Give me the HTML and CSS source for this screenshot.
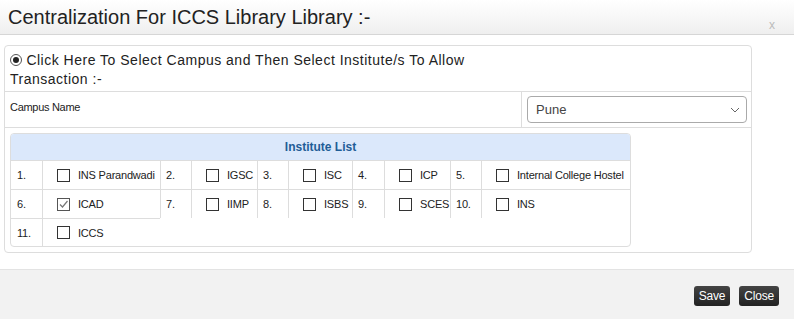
FILE: index.html
```html
<!DOCTYPE html>
<html lang="en">
<head>
  <meta charset="UTF-8" />
  <title>Centralization For ICCS Library</title>
  <link rel="stylesheet" href="styles.css">
</head>
<body>
  <div class="modal">
    <div class="modal-header">
      <h4 class="modal-title">Centralization For ICCS Library Library :-</h4>
      <span class="close">x</span>
    </div>

    <div class="modal-body">
      <div class="panel">
        <div class="row row-head">
          <div class="cell cell-wide"><span class="radio"></span> Click Here To Select Campus and Then Select Institute/s To Allow Transaction :-</div>
        </div>

        <div class="row row-campus">
          <div class="cell cell-label">Campus Name</div>
          <div class="cell cell-select">
            <div class="select">
              <span>Pune</span>
              <svg width="10" height="6" viewBox="0 0 10 6"><path d="M1 1 L5 5 L9 1" fill="none" stroke="#666" stroke-width="1"/></svg>
            </div>
          </div>
        </div>

        <div class="row row-list">
          <div class="inst">
            <div class="inst-head">Institute List</div>
            <div class="inst-grid">
              <div class="num first">1.</div>
              <div class="name"><span class="check"></span>INS Parandwadi</div>
              <div class="num">2.</div>
              <div class="name"><span class="check"></span>IGSC</div>
              <div class="num">3.</div>
              <div class="name"><span class="check"></span>ISC</div>
              <div class="num">4.</div>
              <div class="name"><span class="check"></span>ICP</div>
              <div class="num">5.</div>
              <div class="name"><span class="check"></span>Internal College Hostel</div>

              <div class="num first">6.</div>
              <div class="name"><span class="check checked"><svg width="11" height="11" viewBox="0 0 11 11"><path d="M2 5.5 L4.5 8 L9.5 2" fill="none" stroke="#777" stroke-width="1.2"/></svg></span>ICAD</div>
              <div class="num">7.</div>
              <div class="name"><span class="check"></span>IIMP</div>
              <div class="num">8.</div>
              <div class="name"><span class="check"></span>ISBS</div>
              <div class="num">9.</div>
              <div class="name"><span class="check"></span>SCES</div>
              <div class="num">10.</div>
              <div class="name"><span class="check"></span>INS</div>

              <div class="num first">11.</div>
              <div class="name"><span class="check"></span>ICCS</div>
            </div>
          </div>
        </div>
      </div>
    </div>

    <div class="modal-footer">
      <button class="btn">Save</button>
      <button class="btn">Close</button>
    </div>
  </div>
</body>
</html>
```

FILE: styles.css
```css
* {
  box-sizing: border-box;
  font-family: 'Liberation Sans', Arial, sans-serif;
}

body {
  margin: 0;
  background: #fff;
  color: #333;
}

.modal {
  width: 794px;
  height: 319px;
  display: flex;
  flex-direction: column;
}

.modal-header {
  height: 35px;
  display: flex;
  justify-content: space-between;
  padding: 0 19px 0 8px;
  background: linear-gradient(#ffffff, #efefef);
  border-bottom: 1px solid #d6d6d6;
}

.modal-title {
  margin: 0;
  font-size: 20px;
  font-weight: normal;
  line-height: 35px;
  color: #222;
}

.close {
  align-self: flex-end;
  margin-bottom: 2px;
  font-size: 12px;
  color: #bbb;
}

.modal-body {
  padding: 10px 4px 16px;
}

.panel {
  width: 748px;
  border: 1px solid #ddd;
  border-radius: 4px;
}

.row {
  display: flex;
}

.row-head, .row-campus {
  border-bottom: 1px solid #ddd;
}

.cell-wide {
  width: 475px;
  padding: 5px 5px 2px;
  font-size: 14px;
  line-height: 19px;
  letter-spacing: 0.5px;
  color: #222;
}

.radio {
  display: inline-block;
  width: 12px;
  height: 12px;
  border: 1px solid #555;
  border-radius: 50%;
  vertical-align: -1px;
  position: relative;
}

.radio::after {
  content: "";
  position: absolute;
  left: 2px;
  top: 2px;
  width: 6px;
  height: 6px;
  border-radius: 50%;
  background: #222;
}

.cell-label {
  width: 517px;
  padding: 9px 5px 7px;
  font-size: 11px;
  letter-spacing: -0.3px;
  color: #222;
  border-right: 1px solid #ddd;
}

.cell-select {
  flex: 1;
  padding: 4px 4px 4px 5px;
}

.select {
  height: 27px;
  display: flex;
  align-items: center;
  justify-content: space-between;
  padding: 0 6px 0 8px;
  border: 1px solid #aaa;
  border-radius: 4px;
  font-size: 13px;
  color: #444;
}

.row-list {
  padding: 5px;
}

.inst {
  width: 621px;
  border: 1px solid #ddd;
  border-radius: 4px;
  overflow: hidden;
}

.inst-head {
  height: 26px;
  line-height: 26px;
  text-align: center;
  background: #dbe8fb;
  color: #1f5d97;
  font-size: 12px;
  font-weight: bold;
}

.inst-grid {
  display: grid;
  grid-template-columns: 31px 118px 31px 66px 31px 64px 32px 66px 31px 150px;
  grid-template-rows: 29px 29px 28px;
  font-size: 11px;
  letter-spacing: -0.2px;
  color: #222;
}

.num, .name {
  display: flex;
  align-items: center;
  border-top: 1px solid #ddd;
  border-left: 1px solid #ddd;
}

.num {
  padding-left: 5px;
}

.num.first {
  border-left: none;
  padding-left: 6px;
}

.name {
  padding-left: 14px;
  white-space: nowrap;
}

.check {
  width: 13px;
  height: 13px;
  border: 1px solid #333;
  background: #fff;
  margin-right: 8px;
  display: flex;
  align-items: center;
  justify-content: center;
}

.check.checked {
  border-color: #555;
}

.modal-footer {
  flex: 1;
  display: flex;
  justify-content: flex-end;
  align-items: flex-start;
  gap: 9px;
  padding: 16px 15px 0 0;
  background: #f2f2f2;
  border-top: 1px solid #e3e3e3;
}

.btn {
  height: 20px;
  padding: 0 5px;
  border: none;
  border-radius: 3px;
  background: linear-gradient(#444, #222);
  color: #fff;
  font-size: 12px;
  letter-spacing: -0.2px;
  cursor: pointer;
}
```
